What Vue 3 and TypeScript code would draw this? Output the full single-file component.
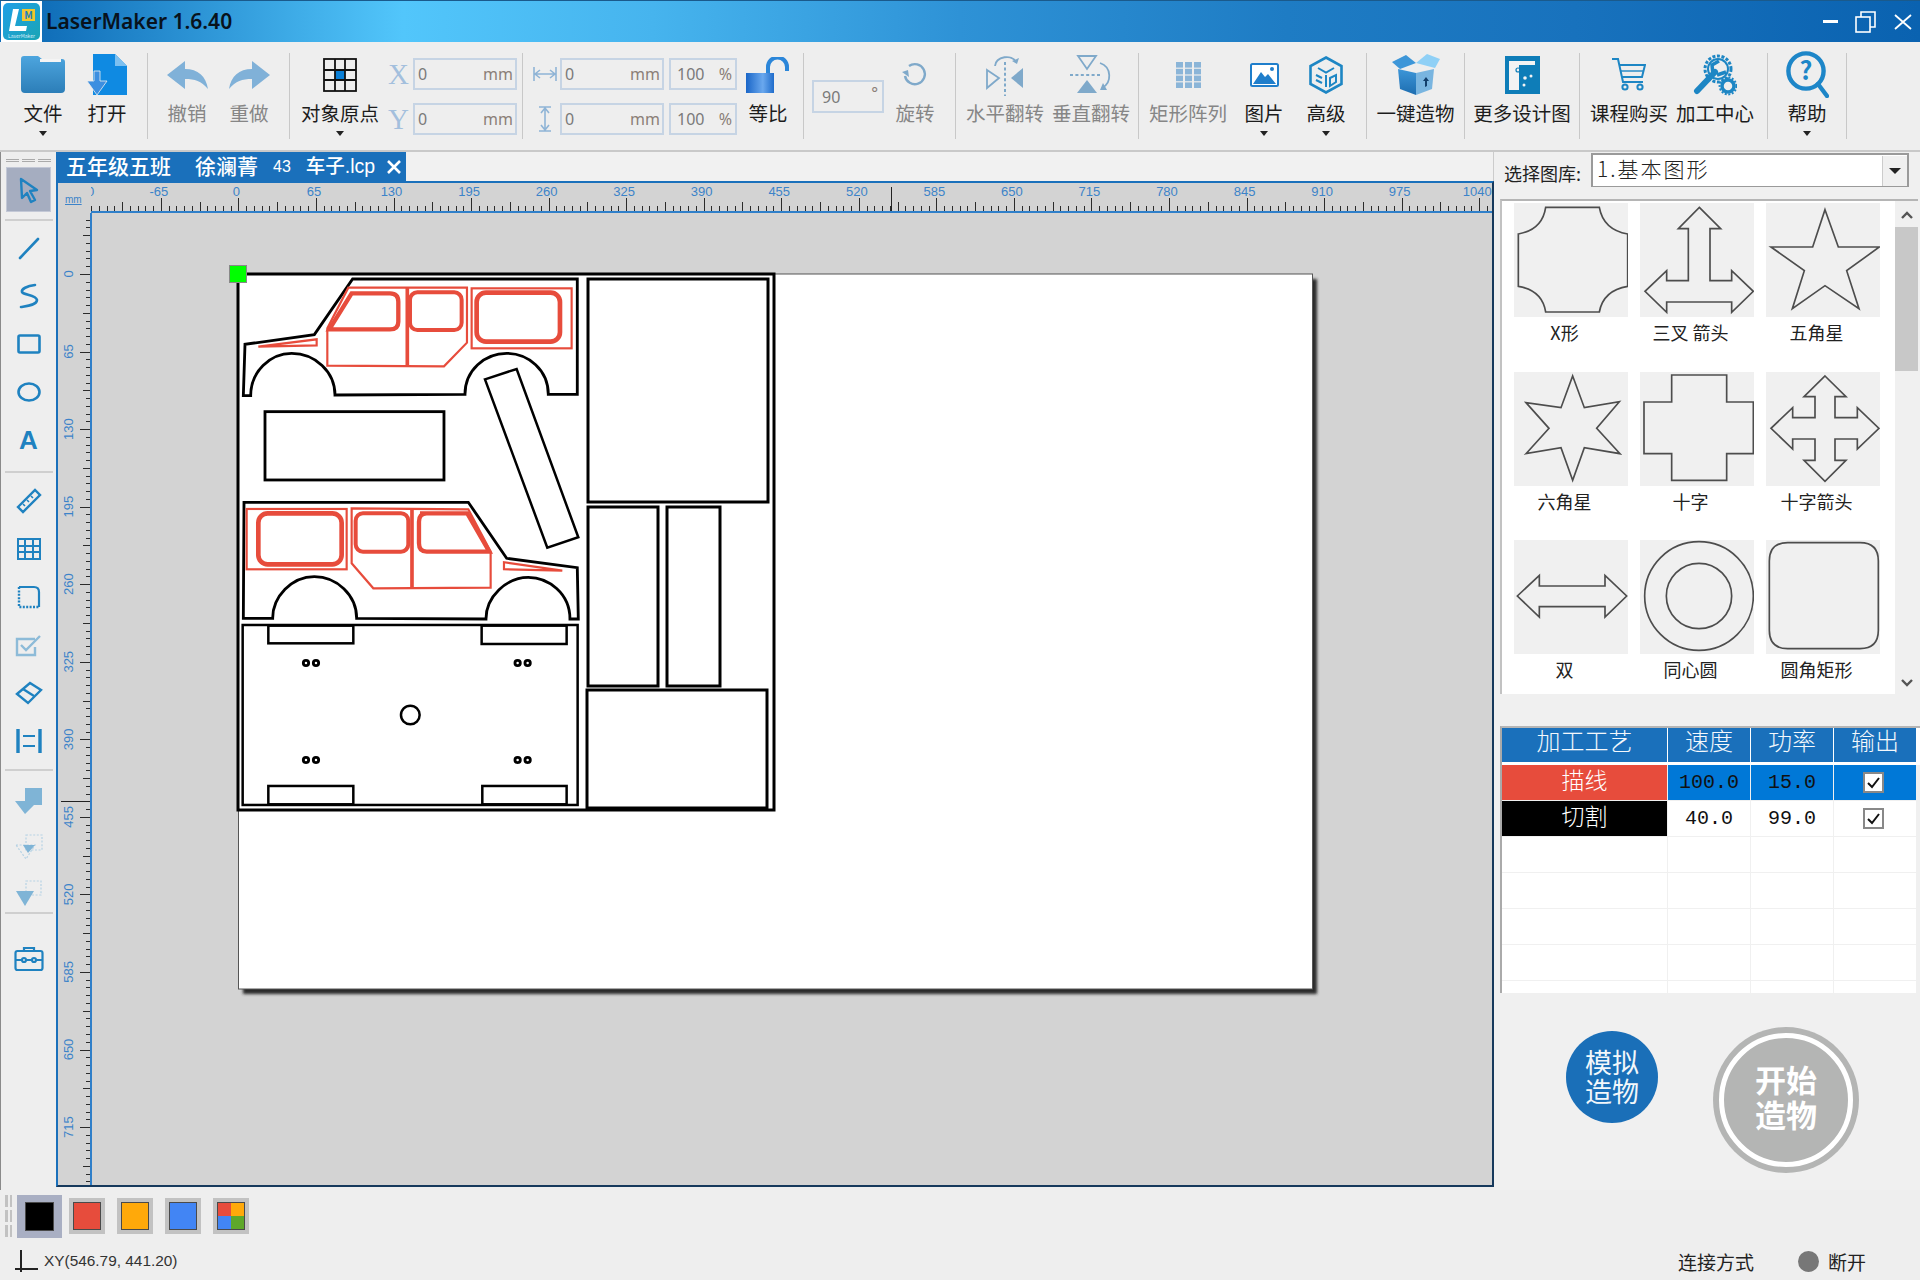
<script setup lang="ts">
import { computed } from 'vue'

const unit = 77.55
const step = unit / 10

const hTicks = computed(() => {
  const list: { x: number; len: number }[] = []
  for (let i = -19; i < 165; i++) {
    const len = i % 10 === 0 ? 14 : i % 5 === 0 ? 10 : 6
    list.push({ x: Math.round(238.4 + i * step) + 0.5, len })
  }
  return list
})
const hLabels = computed(() => {
  const list: { x: number; text: number }[] = []
  for (let i = -2; i <= 16; i++) list.push({ x: 236.4 + i * unit, text: i * 65 })
  return list
})
const vTicks = computed(() => {
  const list: { y: number; len: number }[] = []
  for (let i = -7; i < 120; i++) {
    const len = i % 10 === 0 ? 11 : i % 5 === 0 ? 8 : 5
    list.push({ y: Math.round(274 + i * step) + 0.5, len })
  }
  return list
})
const vLabels = computed(() => {
  const list: { y: number; text: number }[] = []
  for (let i = 0; i <= 11; i++) list.push({ y: 274 + i * unit, text: i * 65 })
  return list
})
const holes = [
  [258, 549], [288, 549], [893, 549], [923, 549],
  [258, 840], [288, 840], [893, 840], [923, 840]
]

const shapes = [
  { name: 'X形', d: 'M95,13 L256,13 Q268,80 341,93 L341,250 Q268,262 256,327 L95,327 Q85,262 13,250 L13,93 Q85,80 95,13Z' },
  { name: '三叉 箭头', d: 'M178,13 L242,77 L210,77 L210,233 L275,233 L275,203 L340,265 L275,328 L275,297 L80,297 L80,328 L15,265 L80,203 L80,233 L145,233 L145,77 L115,77Z' },
  { name: '五角星', d: 'M177,20 L217,132 L340,132 L242,203 L279,317 L177,248 L79,317 L115,203 L15,132 L140,132Z' },
  { name: '六角星', d: 'M176,12 L211,107 L316,89 L248,169 L318,245 L211,227 L176,325 L141,227 L36,245 L105,169 L36,92 L141,107Z' },
  { name: '十字', d: 'M95,9 L260,9 L260,90 L340,90 L340,245 L260,245 L260,325 L95,325 L95,245 L12,245 L12,90 L95,90Z' },
  { name: '十字箭头', d: 'M177,12 L240,74 L207,74 L207,137 L274,137 L274,107 L339,169 L274,231 L274,201 L207,201 L207,265 L240,265 L177,328 L114,265 L147,265 L147,201 L80,201 L80,231 L15,169 L80,107 L80,137 L147,137 L147,74 L114,74Z' },
  { name: '双', d: 'M10,168 L76,106 L76,138 L273,138 L273,106 L338,168 L273,231 L273,200 L76,200 L76,231Z' },
  { name: '同心圆', d: 'M14,168 a163,163 0 1 0 326,0 a163,163 0 1 0 -326,0Z M79,168 a98,98 0 1 0 196,0 a98,98 0 1 0 -196,0Z' },
  { name: '圆角矩形', d: 'M65,8 L282,8 Q337,8 337,63 L337,271 Q337,326 282,326 L65,326 Q10,326 10,271 L10,63 Q10,8 65,8Z' }
]

const rows = [
  { name: '描线', color: 'red', speed: '100.0', power: '15.0', selected: true },
  { name: '切割', color: 'black', speed: '40.0', power: '99.0', selected: false }
]
</script>

<template>
  <div class="app">
    <header class="titlebar">
      <svg class="logo" width="41" height="41" viewBox="0 0 41 41">
        <defs>
          <linearGradient id="logoBg" x1="0" y1="0" x2="1" y2="1">
            <stop offset="0" stop-color="#1f9fe6" />
            <stop offset="1" stop-color="#1aa5b5" />
          </linearGradient>
        </defs>
        <rect width="41" height="41" fill="#fff" />
        <rect x="2" y="2" width="37" height="37" rx="5" fill="url(#logoBg)" />
        <path d="M12,8 L18,8 L14,25 L26,25 L25,30 L8,30Z" fill="#fff" />
        <rect x="21" y="8" width="13" height="12" fill="#f1c62f" />
        <text x="27.5" y="18" font-size="10" font-weight="700" fill="#1a7fc0" text-anchor="middle">M</text>
        <text x="20.5" y="37" font-size="5" fill="#d9eefa" text-anchor="middle">LaserMaker</text>
      </svg>
      <span class="app-name">LaserMaker 1.6.40</span>
      <div class="win-btns">
        <svg width="15" height="4" viewBox="0 0 15 4"><rect width="15" height="3" fill="#fff" /></svg>
        <svg width="22" height="22" viewBox="0 0 22 22" fill="none" stroke="#fff" stroke-width="1.6">
          <rect x="1" y="6" width="14" height="15" />
          <path d="M6,6 V1 H20 V16 H15" />
        </svg>
        <svg width="18" height="16" viewBox="0 0 18 16" stroke="#fff" stroke-width="1.8">
          <path d="M1,1 L17,15 M17,1 L1,15" />
        </svg>
      </div>
    </header>

    <section class="toolbar">
      <div class="group g1">
        <div class="tool w64">
          <div class="ico">
            <svg width="44" height="37" viewBox="0 0 44 37">
              <defs>
                <linearGradient id="folderBg" x1="0" y1="0" x2="0" y2="1">
                  <stop offset="0" stop-color="#4da5de" />
                  <stop offset="1" stop-color="#2c7eb8" />
                </linearGradient>
              </defs>
              <path d="M3,0 H17 L21,3 H41 A3,3 0 0 1 44,6 V33 A4,4 0 0 1 40,37 H4 A4,4 0 0 1 0,33 V3 A3,3 0 0 1 3,0Z" fill="url(#folderBg)" />
              <rect x="19" y="3" width="21" height="3" fill="#f4f4f4" />
            </svg>
          </div>
          <span class="lbl">文件</span><i class="caret"></i>
        </div>
        <div class="tool w64">
          <div class="ico">
            <svg width="40" height="41" viewBox="0 0 40 41">
              <path d="M6,0 H28 L40,12 V41 H6Z" fill="#0f8ae2" />
              <path d="M28,0 L40,12 H28Z" fill="#7cc0f0" />
              <path d="M7,17 H13 V27 H20 L10,41 L0,27 H7Z" fill="#3d8fe0" stroke="#eeeeee" stroke-width="0.8" />
            </svg>
          </div>
          <span class="lbl">打开</span>
        </div>
      </div>
      <i class="sep"></i>

      <div class="group g2">
        <div class="tool w62 off">
          <div class="ico">
            <svg width="41" height="28" viewBox="0 0 41 28"><path d="M0,14 L18,0 V8 C31,8 39,15 41,28 C34,20 28,18 18,18 V28Z" fill="#80b1d8" /></svg>
          </div>
          <span class="lbl">撤销</span>
        </div>
        <div class="tool w62 off">
          <div class="ico">
            <svg width="41" height="28" viewBox="0 0 41 28"><path d="M41,14 L23,0 V8 C10,8 2,15 0,28 C7,20 13,18 23,18 V28Z" fill="#80b1d8" /></svg>
          </div>
          <span class="lbl">重做</span>
        </div>
      </div>
      <i class="sep"></i>

      <div class="group g3">
        <div class="tool w84">
          <div class="ico">
            <svg width="34" height="34" viewBox="0 0 34 34" fill="none" stroke="#111" stroke-width="1.8">
              <rect x="12" y="12" width="10" height="10" fill="#0a7fd6" stroke="none" />
              <rect x="1" y="1" width="32" height="32" />
              <path d="M12,1 V33 M22,1 V33 M1,12 H33 M1,22 H33" />
            </svg>
          </div>
          <span class="lbl">对象原点</span><i class="caret"></i>
        </div>
        <div class="fields xy">
          <div class="field-row">
            <span class="axis x-axis">X</span>
            <div class="field w104"><span>0</span><span class="unit">mm</span></div>
          </div>
          <div class="field-row">
            <span class="axis">Y</span>
            <div class="field w104"><span>0</span><span class="unit">mm</span></div>
          </div>
        </div>
      </div>
      <i class="sep"></i>

      <div class="group g4">
        <div class="fields">
          <div class="field-row size-row">
            <svg class="dim" width="24" height="14" viewBox="0 0 24 14" fill="none" stroke="#8fb4d6" stroke-width="1.6">
              <path d="M1,0 V14 M23,0 V14 M2,7 H22 M7,3 L2,7 L7,11 M17,3 L22,7 L17,11" />
            </svg>
            <div class="field w104"><span>0</span><span class="unit">mm</span></div>
            <div class="field w68"><span>100</span><span class="unit">%</span></div>
          </div>
          <div class="field-row size-row">
            <svg class="dim" width="24" height="26" viewBox="0 0 24 26" fill="none" stroke="#8fb4d6" stroke-width="1.6">
              <path d="M6,1 H18 M6,25 H18 M12,2 V24 M8,7 L12,2 L16,7 M8,19 L12,24 L16,19" />
            </svg>
            <div class="field w104"><span>0</span><span class="unit">mm</span></div>
            <div class="field w68"><span>100</span><span class="unit">%</span></div>
          </div>
        </div>
        <div class="tool w56 lock-tool">
          <div class="ico">
            <svg width="44" height="36" viewBox="0 0 44 36">
              <defs>
                <linearGradient id="lockBg" x1="0" y1="0" x2="1" y2="0">
                  <stop offset="0" stop-color="#1a66c8" />
                  <stop offset="0.6" stop-color="#6aa8ee" />
                  <stop offset="1" stop-color="#1f6ccb" />
                </linearGradient>
              </defs>
              <rect x="0" y="16" width="28" height="20" fill="url(#lockBg)" />
              <path d="M22,16 V10 A9.5,9.5 0 0 1 41,10 V14" fill="none" stroke="#2b86d9" stroke-width="4" />
            </svg>
          </div>
          <span class="lbl">等比</span>
        </div>
      </div>
      <i class="sep"></i>

      <div class="group g5">
        <div class="field rotate-field"><span>90</span><span class="unit deg">°</span></div>
        <div class="tool w50 off rotate-tool">
          <div class="ico">
            <svg width="26" height="25" viewBox="0 0 26 25" fill="none" stroke="#7fa9ca" stroke-width="2.4">
              <path d="M7,4 A10,10 0 1 1 3,14" />
              <path d="M0,10 L6,8 L7,15Z" fill="#7fa9ca" stroke="none" />
            </svg>
          </div>
          <span class="lbl">旋转</span>
        </div>
      </div>
      <i class="sep"></i>

      <div class="group g6">
        <div class="tool w86 off">
          <div class="ico">
            <svg width="38" height="42" viewBox="0 0 38 42" fill="none" stroke="#7fa9ca" stroke-width="1.8">
              <path d="M19,8 V42" stroke-dasharray="3 2.4" stroke-width="2" />
              <path d="M1,16 L13,24 L1,34Z" />
              <path d="M37,14 L25,24 L37,34Z" fill="#7fa9ca" stroke="none" />
              <path d="M9,12 C10,2 26,0 30,8" />
              <path d="M26,7 L31,10 L33,4Z" fill="#7fa9ca" stroke="none" />
            </svg>
          </div>
          <span class="lbl">水平翻转</span>
        </div>
        <div class="tool w86 off">
          <div class="ico">
            <svg width="42" height="39" viewBox="0 0 42 39" fill="none" stroke="#7fa9ca" stroke-width="1.8">
              <path d="M0,20 H32" stroke-dasharray="3 2.4" stroke-width="2" />
              <path d="M8,1 H26 L17,14Z" />
              <path d="M7,38 L17,25 L27,38Z" fill="#7fa9ca" stroke="none" />
              <path d="M30,8 C42,12 42,28 32,33" />
              <path d="M33,28 L30,35 L37,35Z" fill="#7fa9ca" stroke="none" />
            </svg>
          </div>
          <span class="lbl">垂直翻转</span>
        </div>
      </div>
      <i class="sep"></i>

      <div class="group g7">
        <div class="tool w90 off">
          <div class="ico">
            <svg width="25" height="26" viewBox="0 0 25 26" fill="#8bb5d8">
              <template v-for="r in 4" :key="r">
                <rect v-for="c in 3" :key="c" :x="(c - 1) * 9" :y="(r - 1) * 6.8" width="7" height="5.6" />
              </template>
            </svg>
          </div>
          <span class="lbl">矩形阵列</span>
        </div>
        <div class="tool w62">
          <div class="ico">
            <svg width="29" height="24" viewBox="0 0 29 24">
              <rect x="1" y="1" width="27" height="22" rx="1.5" fill="#fff" stroke="#1f7ecb" stroke-width="2" />
              <path d="M3,21 L11,9 L15,14 L18,11 L26,21Z" fill="#1f7ecb" />
              <circle cx="22" cy="6" r="2" fill="#1f7ecb" />
            </svg>
          </div>
          <span class="lbl">图片</span><i class="caret"></i>
        </div>
        <div class="tool w62">
          <div class="ico">
            <svg width="34" height="38" viewBox="0 0 34 38" fill="none" stroke="#1d86c4" stroke-width="2.6">
              <path d="M17,1.5 L32.5,10 V28 L17,36.5 L1.5,28 V10Z" />
              <path d="M9,12 L17,16.5 L25,12 M17,19 V31 M7,19 L13,22 M7,24 L13,27 M21,22 L27,19 V26 L21,30Z" stroke-width="2" />
            </svg>
          </div>
          <span class="lbl">高级</span><i class="caret"></i>
        </div>
      </div>
      <i class="sep"></i>

      <div class="group g8">
        <div class="tool grow">
          <div class="ico">
            <svg width="48" height="41" viewBox="0 0 48 41">
              <defs>
                <linearGradient id="boxBg" x1="0" y1="0" x2="0" y2="1">
                  <stop offset="0" stop-color="#3d96d8" />
                  <stop offset="1" stop-color="#1d6db0" />
                </linearGradient>
              </defs>
              <path d="M6,15 L24,19 V41 L8,35Z" fill="url(#boxBg)" />
              <path d="M42,15 L24,19 V41 L40,35Z" fill="#79b5e0" />
              <path d="M0,8 L14,1 L24,9 L8,15Z" fill="#3d96d8" />
              <path d="M48,5 L35,0 L24,9 L43,14Z" fill="#8fd0f6" />
              <path d="M33,33 V27 H31 L34,23 L37,27 H35 V32Z" fill="#123f6b" />
            </svg>
          </div>
          <span class="lbl">一键造物</span>
        </div>
      </div>
      <i class="sep"></i>

      <div class="group g9">
        <div class="tool grow">
          <div class="ico">
            <svg width="35" height="38" viewBox="0 0 35 38">
              <rect width="35" height="38" fill="#0e7db8" />
              <rect x="4" y="5" width="26" height="29" fill="#f3f3f3" />
              <rect x="14" y="9" width="16" height="25" fill="#0e7db8" />
              <circle cx="13" cy="14" r="2" fill="none" stroke="#0e7db8" stroke-width="1.2" />
              <circle cx="20" cy="22" r="1.8" fill="#f3f3f3" />
              <circle cx="26" cy="20" r="1.5" fill="#f3f3f3" />
              <circle cx="19" cy="29" r="1.5" fill="#f3f3f3" />
            </svg>
          </div>
          <span class="lbl">更多设计图</span>
        </div>
      </div>
      <i class="sep"></i>

      <div class="group g10">
        <div class="tool w86">
          <div class="ico">
            <svg width="34" height="33" viewBox="0 0 34 33" fill="none" stroke="#1d86c4" stroke-width="2">
              <path d="M0,1 H6 L11,24 H31" />
              <path d="M7,7 H33 L30,19 H10" />
              <path d="M8,13 H31" stroke-width="1.4" />
              <circle cx="13" cy="29" r="2.6" />
              <circle cx="28" cy="29" r="2.6" />
            </svg>
          </div>
          <span class="lbl">课程购买</span>
        </div>
        <div class="tool w86">
          <div class="ico">
            <svg width="44" height="43" viewBox="0 0 44 43" fill="none" stroke="#1d86c4">
              <circle cx="25" cy="16" r="13" stroke-width="3" stroke-dasharray="3 1.6" />
              <circle cx="25" cy="16" r="10" stroke-width="2" />
              <path d="M4,38 L22,19" stroke-width="6" stroke-linecap="round" />
              <path d="M20,22 L19,12 L26,8 M24,22 L33,19" stroke-width="3.5" />
              <circle cx="35" cy="33" r="6" stroke-width="3.5" />
              <circle cx="35" cy="33" r="8.4" stroke-width="2" stroke-dasharray="2 1.6" />
            </svg>
          </div>
          <span class="lbl">加工中心</span>
        </div>
      </div>
      <i class="sep"></i>

      <div class="group g11">
        <div class="tool grow">
          <div class="ico">
            <svg width="43" height="47" viewBox="0 0 43 47" fill="none" stroke="#1d86c8" stroke-width="4.4">
              <circle cx="20" cy="20" r="17.6" />
              <path d="M32,33 L41,45" stroke-linecap="round" />
              <text x="20" y="29" font-size="25" font-weight="700" text-anchor="middle" fill="#1d86c8" stroke="none">?</text>
            </svg>
          </div>
          <span class="lbl">帮助</span><i class="caret"></i>
        </div>
      </div>
      <i class="sep"></i>
    </section>

    <main class="middle">
      <aside class="sidetools">
        <div class="grip"><i></i><i></i><i></i></div>
        <div class="side-btn active">
          <svg width="26" height="28" viewBox="0 0 26 28" fill="none" stroke="#1f82c0" stroke-width="2.4" stroke-linejoin="round">
            <path d="M5,3 L21,14 L14,15 L19,24 L15,26 L11,17 L6,22Z" />
          </svg>
        </div>
        <i class="side-sep first"></i>
        <div class="side-item">
          <svg width="24" height="24" viewBox="0 0 24 24" stroke="#1f82c0" stroke-width="2.6" stroke-linecap="round"><path d="M3,22 L21,3" /></svg>
        </div>
        <div class="side-item">
          <svg width="20" height="26" viewBox="0 0 20 26" fill="none" stroke="#1f82c0" stroke-width="2.6" stroke-linecap="round"><path d="M16,2 C8,3 2,6 3,9 C4,12 17,12 18,17 C18,22 8,23 2,24" /></svg>
        </div>
        <div class="side-item">
          <svg width="24" height="20" viewBox="0 0 24 20" fill="none" stroke="#1f82c0" stroke-width="2.6"><rect x="1.5" y="1.5" width="21" height="17" rx="1.5" /></svg>
        </div>
        <div class="side-item">
          <svg width="24" height="20" viewBox="0 0 24 20" fill="none" stroke="#1f82c0" stroke-width="2.6"><ellipse cx="12" cy="10" rx="10.5" ry="8.5" /></svg>
        </div>
        <div class="side-item">
          <span class="letter-a">A</span>
        </div>
        <i class="side-sep second"></i>
        <div class="side-item">
          <svg width="26" height="26" viewBox="0 0 26 26" fill="none" stroke="#1f82c0" stroke-width="2.4">
            <path d="M2,19 L19,2 L24,7 L7,24Z" />
            <path d="M7,16 L9,18 M11,12 L13,14 M15,8 L17,10" stroke-width="1.6" />
          </svg>
        </div>
        <div class="side-item">
          <svg width="24" height="22" viewBox="0 0 24 22" fill="none" stroke="#1f82c0" stroke-width="2"><rect x="1" y="1" width="22" height="20" /><path d="M1,8 H23 M1,14 H23 M8,1 V21 M16,1 V21" /></svg>
        </div>
        <div class="side-item">
          <svg width="24" height="24" viewBox="0 0 24 24" fill="none" stroke="#1f82c0" stroke-width="2.2">
            <path d="M2,2 V22 H22" stroke-dasharray="2 1.4" stroke-width="2.4" />
            <path d="M2,2 H17 Q22,2 22,7 V22" />
          </svg>
        </div>
        <div class="side-item">
          <svg width="27" height="24" viewBox="0 0 27 24" fill="none" stroke="#8dbbd8" stroke-width="2.4">
            <path d="M20,6 H2 V22 H20 V14" />
            <path d="M6,12 L11,17 L25,3" />
          </svg>
        </div>
        <div class="side-item">
          <svg width="28" height="24" viewBox="0 0 28 24" fill="none" stroke="#1f82c0" stroke-width="2.4">
            <path d="M2,13 L15,2 L26,9 L13,22Z" />
            <path d="M8,8 L19,15" />
          </svg>
        </div>
        <div class="side-item">
          <svg width="26" height="24" viewBox="0 0 26 24" fill="none" stroke="#1f82c0">
            <path d="M2,0 V24 M24,0 V24" stroke-width="3.4" />
            <path d="M7,7 H19 M7,17 H19" stroke-width="2.2" />
          </svg>
        </div>
        <i class="side-sep third"></i>
        <div class="side-item small">
          <svg width="27" height="28" viewBox="0 0 27 28" fill="#7fb4d6"><path d="M10,1 H27 V18 H19 L10,27 L0,14 H10Z" /></svg>
        </div>
        <div class="side-item small">
          <svg width="28" height="28" viewBox="0 0 28 28" fill="none" stroke="#b6d2e4" stroke-width="1.2" stroke-dasharray="2 1.6">
            <rect x="11" y="2" width="16" height="15" />
            <path d="M1,12 H20 L11,26Z" />
            <path d="M8,12 H20 L13,20Z" fill="#7fb4d6" stroke="none" />
          </svg>
        </div>
        <div class="side-item small last">
          <svg width="28" height="28" viewBox="0 0 28 28" fill="none" stroke="#b6d2e4" stroke-width="1.2" stroke-dasharray="2 1.6">
            <rect x="11" y="2" width="15" height="14" />
            <path d="M1,12 H19 L10,27Z" fill="#7fb4d6" stroke="none" />
          </svg>
        </div>
        <i class="side-sep"></i>
        <div class="side-item toolbox">
          <svg width="30" height="26" viewBox="0 0 30 26" fill="none" stroke="#1f82c0" stroke-width="2.2">
            <rect x="1.5" y="5" width="27" height="19" rx="2" />
            <path d="M10,5 V2 H20 V5 M2,14 H8 M12,14 H18 M22,14 H28" />
            <circle cx="10" cy="14" r="2" />
            <circle cx="20" cy="14" r="2" />
          </svg>
        </div>
      </aside>

      <div class="workspace">
        <div class="tabbar">
          <div class="tab">
            <span class="t-class">五年级五班</span>
            <span class="t-name">徐澜菁</span>
            <span class="t-num">43</span>
            <span class="t-file">车子.lcp</span>
            <svg class="t-close" width="14" height="14" viewBox="0 0 14 14" stroke="#fff" stroke-width="2.6"><path d="M1,1 L13,13 M13,1 L1,13" /></svg>
          </div>
        </div>
        <div class="board">
          <div class="ruler-top">
            <div class="corner">mm</div>
            <svg class="hruler" width="1401" height="30" viewBox="91 183 1401 30">
              <line v-for="t in hTicks" :key="t.x" :x1="t.x" :x2="t.x" :y1="212" :y2="212 - t.len" stroke="#2b2b2b" />
              <text v-for="l in hLabels" :key="l.text" :x="l.x" y="196" class="rule-text" text-anchor="middle">{{ l.text }}</text>
              <line x1="891.5" x2="891.5" y1="187" y2="212" stroke="#222" />
              <rect x="91" y="211" width="1401" height="2" fill="#2f7fc9" />
            </svg>
          </div>
          <div class="board-main">
            <svg class="vruler" width="34" height="973" viewBox="58 213 34 973">
              <line v-for="t in vTicks" :key="t.y" :y1="t.y" :y2="t.y" :x1="91" :x2="91 - t.len" stroke="#2b2b2b" />
              <text
                v-for="l in vLabels"
                :key="l.text"
                class="rule-text"
                text-anchor="middle"
                :transform="`translate(73 ${l.y}) rotate(-90)`"
              >{{ l.text }}</text>
              <line x1="61" x2="91" y1="801.5" y2="801.5" stroke="#222" />
              <rect x="90" y="213" width="2" height="973" fill="#2f7fc9" />
            </svg>
            <svg class="canvas" width="1400" height="973" viewBox="92 213 1400 973">
              <defs>
                <filter id="paperShadow" x="-2%" y="-2%" width="104%" height="104%">
                  <feGaussianBlur stdDeviation="1.6" />
                </filter>
              </defs>
              <rect x="243" y="279" width="1074" height="715" fill="#2a2a2a" filter="url(#paperShadow)" />
              <rect x="238.5" y="274" width="1074" height="715" fill="#fff" stroke="#555" stroke-width="1" />

              <g fill="none" stroke="#000" stroke-width="3">
                <rect x="238" y="274" width="536" height="536" />
                <rect x="588" y="279" width="180" height="223" />
                <rect x="588" y="507" width="70" height="179" />
                <rect x="667" y="507" width="53" height="179" />
                <rect x="587" y="690" width="180" height="118" />
              </g>

              <g transform="translate(220 250) scale(0.3333)" fill="none" stroke="#000" stroke-width="8.5">
                <path d="M398,87 L1072,87 L1072,433 L985,433 C985,360 925,310 860,310 C795,310 735,360 735,433 L345,435 C345,365 285,310 215,310 C150,310 92,365 92,437 L70,437 L75,283 L283,254Z" />
                <rect x="135" y="485" width="537" height="205" />
                <path d="M795,388 L890,357 L1075,862 L982,893Z" stroke-width="7.5" />
                <path d="M72,757 L745,757 L860,925 L1072,953 L1075,1107 L1050,1107 C1050,1030 985,982 925,982 C860,982 798,1040 798,1107 L410,1105 C410,1035 350,980 283,980 C215,980 158,1040 158,1105 L70,1105Z" />
                <g stroke="#e74c3c" stroke-width="6.5">
                  <path d="M322,235 L322,347 L672,349 L741,278 L741,113 L385,113Z" />
                  <path d="M562,113 V349" stroke-width="11" />
                  <path d="M395,130 L510,130 Q535,130 535,155 L535,215 Q535,238 510,238 L328,238Z" stroke-width="13" />
                  <rect x="570" y="127" width="155" height="113" rx="22" stroke-width="12" />
                  <rect x="755" y="115" width="300" height="180" />
                  <rect x="770" y="128" width="250" height="147" rx="28" stroke-width="14" />
                  <path d="M115,290 L290,268 L290,286Z" stroke-width="6.5" />
                  <rect x="80" y="777" width="300" height="181" />
                  <rect x="115" y="790" width="250" height="153" rx="28" stroke-width="14" />
                  <path d="M395,775 L395,940 L460,1015 L812,1013 L812,905 L745,778Z" />
                  <path d="M576,775 V1015" stroke-width="11" />
                  <rect x="407" y="790" width="158" height="115" rx="22" stroke-width="12" />
                  <path d="M600,790 L742,790 L808,905 L620,905 Q597,905 597,880 L597,815 Q597,790 620,790Z" stroke-width="13" />
                  <path d="M852,937 L852,958 L1027,962Z" stroke-width="6.5" />
                </g>
              </g>

              <g transform="translate(220 480) scale(0.3333)" fill="none" stroke="#000" stroke-width="7.5">
                <rect x="68" y="435" width="1005" height="540" />
                <rect x="145" y="437" width="255" height="53" />
                <rect x="785" y="437" width="255" height="55" />
                <rect x="145" y="918" width="255" height="55" />
                <rect x="787" y="918" width="253" height="55" />
                <circle v-for="h in holes" :key="h.join()" :cx="h[0]" :cy="h[1]" r="8" stroke-width="8.5" />
                <circle cx="571" cy="705" r="28" />
              </g>
              <rect x="229.5" y="265.5" width="17" height="17" fill="#00ff00" stroke="#888" />
            </svg>
          </div>
        </div>
      </div>

      <aside class="rightpanel">
        <div class="lib-row">
          <span class="lib-label">选择图库:</span>
          <div class="lib-select">
            <span class="lib-value">1.基本图形</span>
            <div class="lib-arrow"><i class="caret big"></i></div>
          </div>
        </div>

        <div class="gallery">
          <div class="shapes">
            <div v-for="s in shapes" :key="s.name" class="shape">
              <div class="shape-box">
                <svg width="114" height="114" viewBox="0 0 342 342" preserveAspectRatio="none">
                  <path :d="s.d" fill="none" stroke="#4d4d4d" stroke-width="5" />
                </svg>
              </div>
              <div class="shape-name">{{ s.name }}</div>
            </div>
          </div>
          <div class="scrollbar">
            <svg class="sb-arrow" width="14" height="10" viewBox="0 0 14 10" fill="none" stroke="#555" stroke-width="2.4"><path d="M2,8 L7,3 L12,8" /></svg>
            <div class="thumb"></div>
            <svg class="sb-arrow bottom" width="14" height="10" viewBox="0 0 14 10" fill="none" stroke="#555" stroke-width="2.4"><path d="M2,2 L7,7 L12,2" /></svg>
          </div>
        </div>

        <div class="process">
          <div class="p-head">
            <div>加工工艺</div>
            <div>速度</div>
            <div>功率</div>
            <div>输出</div>
          </div>
          <div class="p-grid">
            <template v-for="r in rows" :key="r.name">
              <div class="p-name" :class="r.color">{{ r.name }}</div>
              <div class="p-num" :class="{ sel: r.selected }">{{ r.speed }}</div>
              <div class="p-num" :class="{ sel: r.selected }">{{ r.power }}</div>
              <div class="p-check" :class="{ sel: r.selected }">
                <svg width="21" height="21" viewBox="0 0 21 21">
                  <rect x="1" y="1" width="19" height="19" fill="#fff" stroke="#888" stroke-width="2" />
                  <path d="M5,11 L9,15 L16,6" fill="none" stroke="#111" stroke-width="2" />
                </svg>
              </div>
            </template>
            <div v-for="n in 20" :key="n" class="p-empty"></div>
          </div>
        </div>

        <div class="actions">
          <div class="btn-sim"><span>模拟</span><span>造物</span></div>
          <div class="btn-start"><div class="btn-ring"><span>开始</span><span>造物</span></div></div>
        </div>
      </aside>
    </main>

    <section class="swatches">
      <div class="sw-grip"><i></i><i></i></div>
      <div class="swatch selected"><i class="c-black"></i></div>
      <div class="swatch"><i class="c-red"></i></div>
      <div class="swatch"><i class="c-orange"></i></div>
      <div class="swatch"><i class="c-blue"></i></div>
      <div class="swatch"><i class="c-multi"></i></div>
    </section>

    <footer class="statusbar">
      <svg width="23" height="23" viewBox="0 0 23 23" stroke="#222" stroke-width="2"><path d="M6,0 V22 M0,19 H23" /></svg>
      <span class="coords">XY(546.79, 441.20)</span>
      <span class="conn">连接方式</span>
      <i class="dot"></i>
      <span class="conn-state">断开</span>
    </footer>
  </div>
</template>

<style>
html,
body {
  margin: 0;
  background: #eeeeee;
}
</style>

<style scoped>
.app {
  width: 1920px;
  height: 1280px;
  overflow: hidden;
  display: flex;
  flex-direction: column;
  background: #eeeeee;
  font-family: "Noto Sans CJK SC", "Noto Sans", sans-serif;
  color: #222;
}

.titlebar {
  height: 42px;
  flex: none;
  box-sizing: border-box;
  border-top: 1px solid #1a5a8c;
  display: flex;
  align-items: center;
  background: linear-gradient(90deg, #0f6db8 2%, #52c6fb 21%, #46b4ee 34%, #2e92d6 50%, #1e7cc4 67%, #1872bd 82%, #0a62b0 100%);
}
.logo {
  margin: 0 4px 0 1px;
}
.app-name {
  font-family: "Noto Sans", sans-serif;
  font-size: 21px;
  font-weight: 600;
  color: #08121c;
  margin-top: -2px;
}
.win-btns {
  margin-left: auto;
  display: flex;
  align-items: center;
  gap: 17px;
  padding-right: 8px;
}

.toolbar {
  height: 110px;
  flex: none;
  box-sizing: border-box;
  display: flex;
  align-items: flex-start;
  background: #eeeeee;
  border-bottom: 2px solid #c9c9c9;
}
.group {
  display: flex;
  align-items: flex-start;
  box-sizing: border-box;
  height: 100%;
}
.g1 { width: 147px; padding-left: 11px; }
.g2 { width: 141px; padding-left: 8px; }
.g3 { width: 232px; padding-left: 8px; }
.g4 { width: 280px; padding-left: 10px; }
.g5 { width: 151px; padding-left: 8px; }
.g6 { width: 182px; padding-left: 6px; }
.g7 { width: 227px; padding-left: 4px; }
.g8 { width: 97px; }
.g9 { width: 114px; }
.g10 { width: 187px; padding-left: 6px; }
.g11 { width: 78px; }
.sep {
  width: 1px;
  height: 86px;
  margin-top: 11px;
  background: #c8c8c8;
  flex: none;
}
.tool {
  display: flex;
  flex-direction: column;
  align-items: center;
  padding-top: 6px;
  flex: none;
}
.grow { width: 100%; }
.w50 { width: 50px; }
.w56 { width: 56px; }
.w62 { width: 62px; }
.w64 { width: 64px; }
.w84 { width: 84px; }
.w86 { width: 86px; }
.w90 { width: 90px; }
.ico {
  height: 53px;
  display: flex;
  align-items: center;
  justify-content: center;
}
.lbl {
  font-size: 19.5px;
  line-height: 24px;
  color: #1c1c1c;
  white-space: nowrap;
}
.off .lbl {
  color: #868686;
}
.caret {
  display: block;
  width: 0;
  height: 0;
  margin-top: 6px;
  border-left: 4px solid transparent;
  border-right: 4px solid transparent;
  border-top: 5px solid #222;
}
.caret.big {
  margin: 0;
  border-left-width: 6px;
  border-right-width: 6px;
  border-top-width: 6px;
}

.fields {
  display: flex;
  flex-direction: column;
  gap: 13px;
  padding-top: 16px;
}
.xy {
  margin-left: 6px;
}
.field-row {
  display: flex;
  align-items: center;
  height: 32px;
}
.size-row {
  gap: 5px;
}
.dim {
  margin-right: -2px;
  flex: none;
}
.axis {
  width: 18px;
  margin-right: 7px;
  font-family: "Liberation Serif", serif;
  font-size: 29px;
  color: #a3bfdd;
  text-align: center;
}
.x-axis {
  width: 16px;
  margin-right: 9px;
}
.field {
  box-sizing: border-box;
  height: 32px;
  border: 2px solid #c6d4e4;
  display: flex;
  align-items: center;
  justify-content: space-between;
  padding: 0 2px 0 3px;
  font-family: "Noto Sans", sans-serif;
  font-size: 16px;
  color: #7a7a7a;
}
.w104 { width: 104px; }
.w68 { width: 68px; padding: 0 3px 0 6px; }
.unit {
  color: #8b7f78;
}
.lock-tool {
  margin-left: 3px;
}
.rotate-field {
  width: 72px;
  height: 33px;
  margin-top: 38px;
  padding: 0 4px 0 8px;
}
.deg {
  margin-bottom: 8px;
}
.rotate-tool {
  margin-left: 6px;
}

.middle {
  flex: none;
  height: 1038px;
  display: flex;
}

.sidetools {
  width: 56px;
  flex: none;
  box-sizing: border-box;
  border-left: 1px solid #8a8a8a;
  display: flex;
  flex-direction: column;
  align-items: center;
}
.grip {
  display: flex;
  gap: 3px;
  margin-top: 1px;
  height: 14px;
  width: 46px;
  align-items: center;
}
.grip i {
  flex: 1;
  height: 3px;
  border-top: 1px solid #aaa;
  border-bottom: 1px solid #aaa;
  box-sizing: border-box;
}
.side-btn {
  width: 45px;
  height: 45px;
  flex: none;
  display: flex;
  align-items: center;
  justify-content: center;
}
.side-btn.active {
  background: #a5adc0;
  border: 1px solid #c3c8d6;
  box-sizing: border-box;
}
.side-sep {
  display: block;
  width: 48px;
  height: 2px;
  background: #cfcfcf;
  flex: none;
  margin: 4px 0;
}
.side-sep.first {
  margin: 7px 0 3px;
}
.side-sep.second {
  margin: 7px 0 4px;
}
.side-sep.third {
  margin: 4px 0 7px;
}
.side-item {
  width: 100%;
  height: 48px;
  flex: none;
  display: flex;
  align-items: center;
  justify-content: center;
}
.side-item.small {
  height: 46px;
}
.side-item.last {
  height: 45px;
  margin-bottom: -7px;
}
.toolbox {
  margin-top: 17px;
}
.letter-a {
  font-family: "Liberation Sans", sans-serif;
  font-size: 26px;
  font-weight: 700;
  color: #1f82c0;
}

.workspace {
  width: 1438px;
  flex: none;
  display: flex;
  flex-direction: column;
}
.tabbar {
  height: 29px;
  flex: none;
  background: #f1f1f1;
  border-right: 1px solid #ccc;
  box-sizing: border-box;
}
.tab {
  width: 350px;
  height: 29px;
  box-sizing: border-box;
  background: #1a70bb;
  color: #fff;
  display: flex;
  align-items: center;
  padding-left: 10px;
  font-family: "Liberation Sans", "Noto Sans CJK SC", sans-serif;
  font-size: 21px;
  line-height: 29px;
  font-weight: 500;
  white-space: nowrap;
}
.t-name {
  margin-left: 24px;
}
.t-num {
  margin-left: 15px;
  font-size: 16px;
}
.t-file {
  margin-left: 15px;
  font-size: 19.5px;
}
.t-close {
  margin-left: auto;
  margin-right: 5px;
}
.board {
  height: 1006px;
  flex: none;
  box-sizing: border-box;
  border: 2px solid #1a70bb;
  border-right-color: #16395c;
  border-bottom-color: #16395c;
  background: #d3d3d3;
  display: flex;
  flex-direction: column;
  overflow: hidden;
}
.ruler-top {
  height: 30px;
  flex: none;
  display: flex;
}
.corner {
  width: 33px;
  flex: none;
  box-sizing: border-box;
  padding: 11px 0 0 7px;
  font-family: "Liberation Sans", sans-serif;
  font-size: 10px;
  line-height: 12px;
  color: #3c83c9;
  text-decoration: underline;
}
.hruler,
.vruler,
.canvas {
  display: block;
  flex: none;
}
.rule-text {
  font-family: "Liberation Sans", sans-serif;
  font-size: 13px;
  fill: #3c83c9;
}
.board-main {
  display: flex;
  flex: 1;
  min-height: 0;
}

.rightpanel {
  width: 426px;
  flex: none;
  box-sizing: border-box;
  padding-left: 8px;
  background: #f0f0f0;
  display: flex;
  flex-direction: column;
}
.lib-row {
  height: 47px;
  flex: none;
  display: flex;
  align-items: flex-start;
  box-sizing: border-box;
  padding-top: 1px;
  margin-left: 2px;
}
.lib-label {
  width: 87px;
  font-size: 18px;
  line-height: 40px;
}
.lib-select {
  width: 318px;
  height: 34px;
  box-sizing: border-box;
  background: #fff;
  border: 2px solid #9a9a9a;
  border-width: 2px 2px 1px 2px;
  display: flex;
  align-items: center;
  justify-content: space-between;
  padding-left: 4px;
  font-size: 21px;
  letter-spacing: 2px;
  color: #222;
  font-weight: 300;
}
.lib-value {
  line-height: 26px;
  margin-top: -6px;
}
.lib-arrow {
  width: 24px;
  height: 30px;
  background: #f0f0f0;
  border-left: 1px solid #ccc;
  display: flex;
  align-items: center;
  justify-content: center;
}

.gallery {
  width: 418px;
  height: 495px;
  margin-left: -2px;
  flex: none;
  box-sizing: border-box;
  background: #fff;
  border-top: 2px solid #b5b5b5;
  border-left: 2px solid #c2c2c2;
  display: flex;
  overflow: hidden;
}
.shapes {
  flex: 1;
  display: grid;
  grid-template-columns: repeat(3, 114px);
  column-gap: 12px;
  grid-auto-rows: 168.5px;
  padding: 2px 0 0 12px;
}
.shape-box {
  width: 114px;
  height: 114px;
  background: #f0f0f0;
}
.shape-box svg {
  display: block;
}
.shape-name {
  font-size: 18px;
  line-height: 24px;
  margin-top: 3px;
  padding-right: 13px;
  text-align: center;
  color: #222;
  white-space: nowrap;
}
.scrollbar {
  width: 23px;
  flex: none;
  background: #f0f0f0;
  display: flex;
  flex-direction: column;
  align-items: center;
}
.sb-arrow {
  margin-top: 9px;
  flex: none;
}
.thumb {
  width: 100%;
  height: 144px;
  margin-top: 7px;
  background: #c8c8c8;
  flex: none;
}
.sb-arrow.bottom {
  margin-top: auto;
  margin-bottom: 6px;
}

.process {
  width: 420px;
  height: 267px;
  margin: 32px 0 0 -2px;
  flex: none;
  box-sizing: border-box;
  background: #fff;
  border-top: 2px solid #b5b5b5;
  border-left: 2px solid #aaa;
}
.p-head {
  height: 34px;
  display: grid;
  grid-template-columns: 165px 82px 82px 82px;
  column-gap: 1px;
  font-family: "Liberation Sans", "Noto Sans CJK SC", sans-serif;
  font-size: 24px;
  line-height: 28px;
  text-align: center;
}
.p-head div {
  background: #1a70bb;
  color: #f4f8fc;
  font-weight: 300;
}
.p-grid {
  height: 228px;
  margin-top: 3px;
  overflow: hidden;
  display: grid;
  grid-template-columns: 165px 82px 82px 82px;
  grid-auto-rows: 35px;
  gap: 1px;
  background: #f0f0f0;
  padding-right: 3px;
}
.p-grid > div {
  background: #fff;
  display: flex;
  align-items: center;
  justify-content: center;
}
.p-grid > .p-name {
  font-family: "Liberation Sans", "Noto Sans CJK SC", sans-serif;
  font-size: 23px;
  line-height: 28px;
  padding-bottom: 3px;
  box-sizing: border-box;
  color: #fff;
  font-weight: 300;
}
.p-grid > .red {
  background: #e74c3c;
}
.p-grid > .black {
  background: #000;
}
.p-num {
  font-family: "Liberation Mono", monospace;
  font-size: 20px;
  color: #111;
}
.p-grid > .p-check {
  padding-right: 4px;
  box-sizing: border-box;
}
.p-grid > .sel {
  background: #0078d7;
}

.actions {
  flex: 1;
  display: flex;
  align-items: flex-start;
  padding: 34px 0 0 64px;
  gap: 55px;
}
.btn-sim,
.btn-ring {
  font-family: "Liberation Sans", "Noto Sans CJK SC", sans-serif;
  display: flex;
  flex-direction: column;
  align-items: center;
  justify-content: center;
  text-align: center;
  box-sizing: border-box;
}
.btn-sim {
  width: 92px;
  height: 92px;
  margin-top: 4px;
  border-radius: 50%;
  background: #1a6fb8;
  color: #f2f7fb;
  font-size: 27px;
  line-height: 29px;
  flex: none;
  padding-top: 3px;
}
.btn-start {
  width: 146px;
  height: 146px;
  box-sizing: border-box;
  padding: 6px;
  border-radius: 50%;
  background: #b4b5b4;
  flex: none;
}
.btn-ring {
  width: 100%;
  height: 100%;
  border: 5px solid #fff;
  border-radius: 50%;
  color: #fff;
  font-size: 31px;
  font-weight: 700;
  line-height: 35px;
  padding-bottom: 3px;
}

.swatches {
  height: 52px;
  flex: none;
  display: flex;
  align-items: center;
  padding-left: 5px;
}
.sw-grip {
  display: flex;
  gap: 2px;
  height: 42px;
  width: 7px;
  margin-right: 5px;
  flex: none;
}
.sw-grip i {
  flex: 1;
  background: repeating-linear-gradient(#c2c2c2 0 12px, transparent 12px 15px);
}
.swatch {
  width: 36px;
  height: 36px;
  box-sizing: border-box;
  padding: 4px;
  margin-right: 12px;
  background: #c2c2c2;
  flex: none;
}
.swatch.selected {
  width: 45px;
  height: 43px;
  padding: 7px 8px;
  margin-right: 7px;
  background: #a9afc3;
}
.swatch i {
  display: block;
  width: 100%;
  height: 100%;
  box-sizing: border-box;
  border: 1px solid #4a4a4a;
}
.c-black { background: #000; }
.c-red { background: #e74c3c; }
.c-orange { background: #ffa90a; }
.c-blue { background: #4285f4; }
.c-multi {
  background:
    linear-gradient(#e74c3c, #e74c3c) 0 0 / 50% 50% no-repeat,
    linear-gradient(#ffa90a, #ffa90a) 100% 0 / 50% 50% no-repeat,
    linear-gradient(#4285f4, #4285f4) 0 100% / 50% 50% no-repeat,
    linear-gradient(#5ea82a, #5ea82a) 100% 100% / 50% 50% no-repeat;
}

.statusbar {
  flex: 1;
  display: flex;
  align-items: center;
  padding-left: 15px;
  box-sizing: border-box;
}
.coords {
  margin-left: 6px;
  font-family: "Liberation Sans", sans-serif;
  font-size: 15.4px;
  color: #333;
}
.conn {
  margin-left: auto;
  font-size: 19px;
}
.dot {
  width: 21px;
  height: 21px;
  margin-left: 44px;
  border-radius: 50%;
  background: #777;
}
.conn-state {
  margin: 0 54px 0 9px;
  font-size: 19px;
}
</style>
